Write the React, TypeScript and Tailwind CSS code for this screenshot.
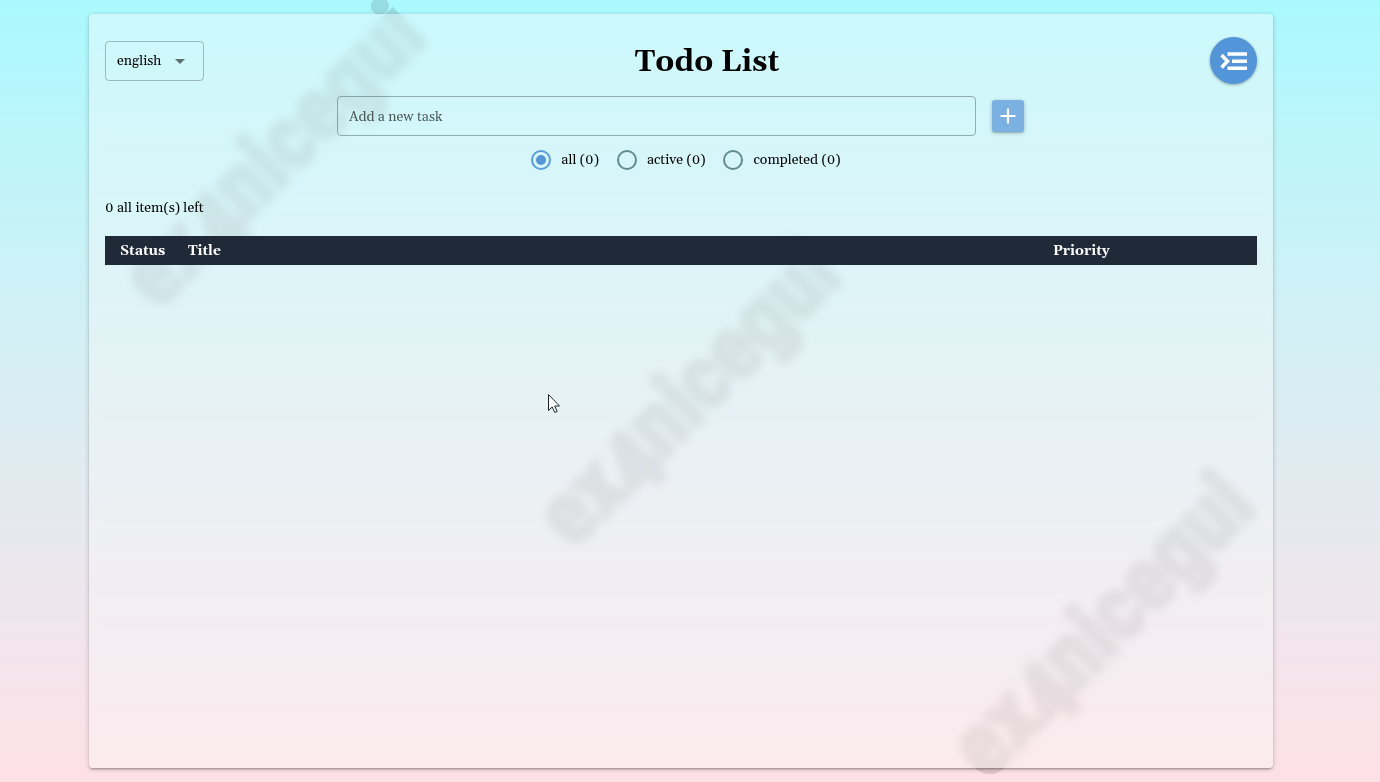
import { useState } from "react";

const filters = ["all", "active", "completed"];
const languages = ["english", "chinese"];

function Watermark({ x, y }: { x: number; y: number }) {
  return (
    <text
      transform={`translate(${x} ${y}) rotate(-45)`}
      textAnchor="middle"
      dominantBaseline="middle"
      className="fill-current stroke-current stroke-[5px] text-[88px] font-bold [font-family:Impact,'Liberation_Sans_Narrow','Roboto_Condensed','Open_Sans_Condensed',sans-serif]"
    >
      ex4nicegui
    </text>
  );
}

function Cursor() {
  return (
    <svg className="pointer-events-none absolute left-[547px] top-[393px]" width="14" height="21" viewBox="0 0 14 21" aria-hidden="true">
      <path d="M1.5 1.5v16l3.7-3.5 2.6 5.5 2.4-1.1-2.5-5.4h4.8z" fill="#fff" stroke="#1c2430" strokeWidth="1" />
    </svg>
  );
}

export default function App() {
  const [filter, setFilter] = useState("all");
  const [task, setTask] = useState("");

  return (
    <div className="relative min-h-screen overflow-hidden bg-linear-to-b from-[#aaf9fe] to-[#fee0e7] py-[14px] pr-[18px] text-[14px] leading-5 text-black oldstyle-nums [font-family:Georgia,Gelasio,'Liberation_Serif',serif]">
      <svg className="pointer-events-none absolute inset-0 h-full w-full text-black opacity-11" aria-hidden="true">
        <Watermark x={277} y={159} />
        <Watermark x={692} y={398} />
        <Watermark x={1106} y={629} />
      </svg>

      <main className="relative mx-auto min-h-[calc(100vh-28px)] max-w-[1184px] rounded bg-[#fbfbfb]/40 px-4 pt-[22px] shadow-[0_1px_5px_rgba(0,0,0,0.2),0_2px_2px_rgba(0,0,0,0.14),0_3px_1px_-2px_rgba(0,0,0,0.12)] backdrop-blur-xs">
        <header className="flex h-12 items-center justify-between">
          <div className="relative mt-px">
            <select
              aria-label="Language"
              className="block h-10 w-[99px] appearance-none rounded border border-black/25 bg-transparent pl-[11px] outline-none"
            >
              {languages.map((name) => (
                <option key={name}>{name}</option>
              ))}
            </select>
            <svg className="pointer-events-none absolute right-3 top-2 text-black/55" width="24" height="24" viewBox="0 0 24 24" fill="currentColor" aria-hidden="true">
              <path d="M7 10l5 5 5-5z" />
            </svg>
          </div>
          <h1 className="pt-[3px] text-[30px] font-bold leading-10">Todo List</h1>
          <button
            aria-label="Open menu"
            className="size-[47px] rounded-full bg-[#5295d8] text-white shadow-[0_1px_3px_rgba(0,0,0,0.35)]"
          >
            <svg width="47" height="47" viewBox="0 0 47 47" fill="none" stroke="currentColor" strokeWidth="3.6" aria-hidden="true">
              <path d="M17.5 17h19.500M22 24.300h15M17.500 31.300h19.500" />
              <path d="M11.500 18l6 6.200-6 6.200" />
            </svg>
          </button>
        </header>

        <form className="mt-3 flex items-center justify-center gap-4 pr-px" onSubmit={(e) => e.preventDefault()}>
          <input
            aria-label="Add a new task"
            placeholder="Add a new task"
            value={task}
            onChange={(e) => setTask(e.target.value)}
            className="h-10 w-[639px] min-w-0 rounded border border-black/30 bg-transparent px-[11px] pt-px outline-none placeholder:text-black/65"
          />
          <button
            aria-label="Add task"
            className="flex size-8 shrink-0 items-center justify-center rounded-[3px] bg-[#7ab1e2] text-white shadow-[0_1px_4px_rgba(0,0,0,0.25),0_1px_1px_rgba(0,0,0,0.15)]"
          >
            <svg width="24" height="24" viewBox="0 0 24 24" fill="currentColor" aria-hidden="true">
              <path d="M19.500 13.100h-6.400v6.400h-2.200v-6.400H4.500v-2.200h6.400V4.500h2.200v6.400h6.400z" />
            </svg>
          </button>
        </form>

        <fieldset className="mt-[14px] flex items-center justify-center gap-[18px] pl-[10px]">
          {filters.map((name) => (
            <label key={name} className="flex items-center gap-[10px]">
              <input
                type="radio"
                name="filter"
                checked={filter === name}
                onChange={() => setFilter(name)}
                className="size-5 appearance-none rounded-full border-2 border-[#638b8f] bg-clip-content p-[3px] checked:border-[#5b9cde] checked:bg-[#5295d8]"
              />
              {name} (0)
            </label>
          ))}
        </fieldset>

        <p className="mt-7">0 all item(s) left</p>

        <table className="mt-[18px] w-full table-fixed text-left">
          <thead className="bg-[#1f2937] text-white">
            <tr className="h-[29px]">
              <th className="w-[83px] pl-[15px] font-bold">Status</th>
              <th className="font-bold">Title</th>
              <th className="w-[204px] font-bold">Priority</th>
            </tr>
          </thead>
          <tbody />
        </table>
      </main>
      <Cursor />
    </div>
  );
}
